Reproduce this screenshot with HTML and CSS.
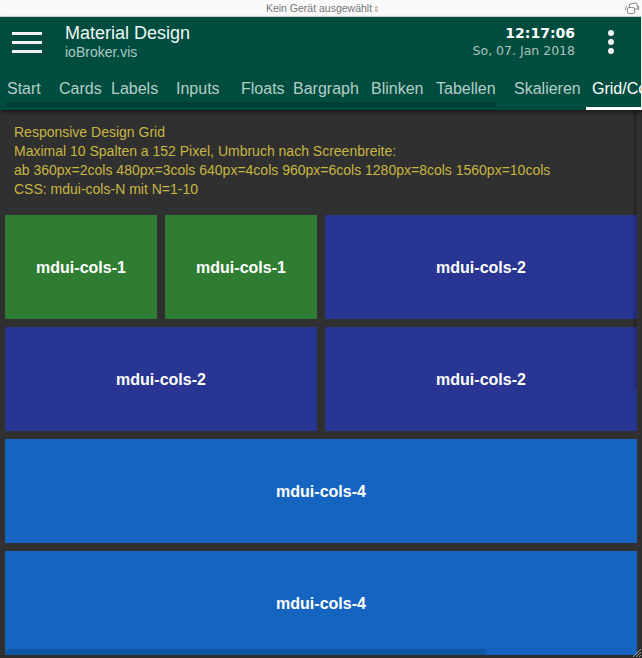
FILE: index.html
```html
<!DOCTYPE html>
<html lang="de">
<head>
    <meta charset="UTF-8">
    <meta name="viewport" content="width=device-width, initial-scale=1.0">
    <title>Material Design - ioBroker.vis</title>
    <link rel="stylesheet" href="styles.css">
</head>
<body>
    <div class="device-bar">
        <span class="device-name">Kein Gerät ausgewählt<span class="device-arrows">&#8661;</span></span>
        <svg class="device-icon" width="16" height="13" viewBox="0 0 16 13">
            <rect x="5.5" y="1.5" width="8" height="6" rx="1.5" fill="none" stroke="#8a8a8a" stroke-width="1" transform="rotate(-12 9.5 4.5)"/>
            <rect x="3.5" y="5.5" width="7" height="6" rx="1.5" fill="#fafafa" stroke="#8a8a8a" stroke-width="1"/>
            <path d="M1.5 8 Q1 5 3 4" fill="none" stroke="#8a8a8a" stroke-width="1"/>
            <path d="M14 4 Q15.5 6 14.5 8" fill="none" stroke="#8a8a8a" stroke-width="1"/>
        </svg>
    </div>

    <div class="header">
        <div class="toolbar">
            <div class="menu-btn">
                <span></span><span></span><span></span>
            </div>
            <div class="app-title">
                <div class="title">Material Design</div>
                <div class="subtitle">ioBroker.vis</div>
            </div>
            <div class="clock">
                <div class="time">12:17:06</div>
                <div class="date">So, 07. Jan 2018</div>
            </div>
            <div class="more-btn">
                <span></span><span></span><span></span>
            </div>
        </div>
        <div class="tabs">
            <div class="tab w4">Start</div>
            <div class="tab w4">Cards</div>
            <div class="tab w5">Labels</div>
            <div class="tab w5">Inputs</div>
            <div class="tab w4">Floats</div>
            <div class="tab w6">Bargraph</div>
            <div class="tab w5">Blinken</div>
            <div class="tab w6">Tabellen</div>
            <div class="tab w6">Skalieren</div>
            <div class="tab active">Grid/Co</div>
        </div>
        <div class="tabs-scroll"></div>
    </div>

    <div class="main">
        <div class="intro">
            Responsive Design Grid<br>
            Maximal 10 Spalten a 152 Pixel, Umbruch nach Screenbreite:<br>
            ab 360px=2cols 480px=3cols 640px=4cols 960px=6cols 1280px=8cols 1560px=10cols<br>
            CSS: mdui-cols-N mit N=1-10
        </div>

        <div class="grid">
            <div class="cell cols-1 green">mdui-cols-1</div>
            <div class="cell cols-1 green">mdui-cols-1</div>
            <div class="cell cols-2 indigo">mdui-cols-2</div>
            <div class="cell cols-2 indigo">mdui-cols-2</div>
            <div class="cell cols-2 indigo">mdui-cols-2</div>
            <div class="cell cols-4 blue">mdui-cols-4</div>
            <div class="cell cols-4 blue">mdui-cols-4</div>
        </div>
    </div>

    <div class="vscroll"></div>
    <div class="hscroll"></div>
    <div class="bottom-edge"></div>
    <svg class="grip" width="12" height="12" viewBox="0 0 12 12">
        <path d="M11 3 L3 11 M11 6 L6 11 M11 9 L9 11" stroke="#9a9a9a" stroke-width="1"/>
    </svg>
</body>
</html>
```

FILE: styles.css
```css
html, body {
    margin: 0;
    padding: 0;
}
body {
    font-family: "Liberation Sans", Arial, sans-serif;
    background-color: #303030;
    width: 642px;
    height: 658px;
    overflow: hidden;
    position: relative;
}

/* device emulator bar */
.device-bar {
    height: 16px;
    background-color: #fafafa;
    border-bottom: 1px solid #dcdcdc;
    display: flex;
    justify-content: center;
    align-items: center;
    position: relative;
}
.device-name {
    font-size: 10.5px;
    color: #777;
    margin-left: 4px;
}
.device-arrows {
    font-size: 8px;
    color: #999;
    margin-left: 1px;
}
.device-icon {
    position: absolute;
    right: 2px;
    top: 2px;
}

/* header */
.header {
    background-color: #004d40;
    height: 93px;
    position: relative;
    box-shadow: 0 2px 4px rgba(0, 0, 0, 0.5);
    z-index: 2;
    border-right: 1px solid #e8e8e8;
}
.toolbar {
    height: 50px;
    padding-bottom: 8px;
    display: flex;
    align-items: center;
}
.menu-btn {
    width: 30px;
    margin-left: 12px;
    display: flex;
    flex-direction: column;
    gap: 6px;
}
.menu-btn span {
    display: block;
    height: 3px;
    background-color: #f2f2f2;
}
.app-title {
    margin-left: 23px;
}
.title {
    font-size: 18px;
    color: #eef6f4;
    line-height: 21px;
}
.subtitle {
    font-size: 14px;
    color: #a9c9c2;
    line-height: 17px;
}
.clock {
    margin-left: auto;
    text-align: right;
    font-family: "DejaVu Sans", Verdana, sans-serif;
}
.time {
    font-size: 14px;
    font-weight: bold;
    color: #ffffff;
    line-height: 18px;
}
.date {
    font-size: 12.5px;
    color: #a9c3bd;
    line-height: 18px;
}
.more-btn {
    width: 6px;
    margin-left: 33px;
    margin-right: 27px;
    display: flex;
    flex-direction: column;
    gap: 3px;
}
.more-btn span {
    display: block;
    width: 6px;
    height: 6px;
    border-radius: 50%;
    background-color: #f2f2f2;
}

.tabs {
    display: flex;
    height: 35px;
    padding-left: 1px;
    overflow: hidden;
    white-space: nowrap;
}
.tab {
    flex: none;
    box-sizing: border-box;
    padding: 6px 0 0 6px;
    font-size: 16px;
    line-height: 16px;
    color: #b3cdc7;
    overflow: hidden;
}
.tab.w4 { width: 52px; }
.tab.w5 { width: 65px; }
.tab.w6 { width: 78px; }
.tab.active {
    color: #ffffff;
    border-bottom: 3px solid #ffffff;
    width: 55px;
}
.tabs-scroll {
    position: absolute;
    left: 5px;
    top: 85px;
    width: 492px;
    height: 5px;
    border-radius: 3px;
    background-color: rgba(0, 0, 0, 0.18);
}

/* content */
.main {
    padding: 13px 5px 0 5px;
    border-left: 1px solid #262626;
    margin-left: -1px;
}
.intro {
    padding: 0 9px;
    font-size: 14px;
    line-height: 19px;
    color: #c9b640;
    margin-bottom: 16px;
}
.grid {
    display: flex;
    flex-wrap: wrap;
    gap: 8px;
    width: 632px;
}
.cell {
    box-sizing: border-box;
    height: 104px;
    padding-top: 2px;
    display: flex;
    justify-content: center;
    align-items: center;
    color: #ffffff;
    font-size: 16px;
    font-weight: bold;
}
.cols-1 { width: 152px; }
.cols-2 { width: 312px; }
.cols-4 { width: 632px; }
.green { background-color: #2e7d32; }
.indigo { background-color: #283593; }
.blue { background-color: #1565c0; }

/* scrollbars of the emulated screen */
.vscroll {
    position: absolute;
    left: 633px;
    top: 110px;
    width: 4px;
    height: 280px;
    border-radius: 2px;
    background-color: rgba(0, 0, 0, 0.15);
}
.hscroll {
    position: absolute;
    left: 5px;
    top: 649px;
    width: 482px;
    height: 6px;
    border-radius: 3px;
    background-color: rgba(0, 0, 0, 0.15);
}
.bottom-edge {
    position: absolute;
    left: 0;
    top: 655px;
    width: 642px;
    height: 3px;
    background-color: #2c2c2c;
}
.grip {
    position: absolute;
    right: 0;
    bottom: 0;
}
```
